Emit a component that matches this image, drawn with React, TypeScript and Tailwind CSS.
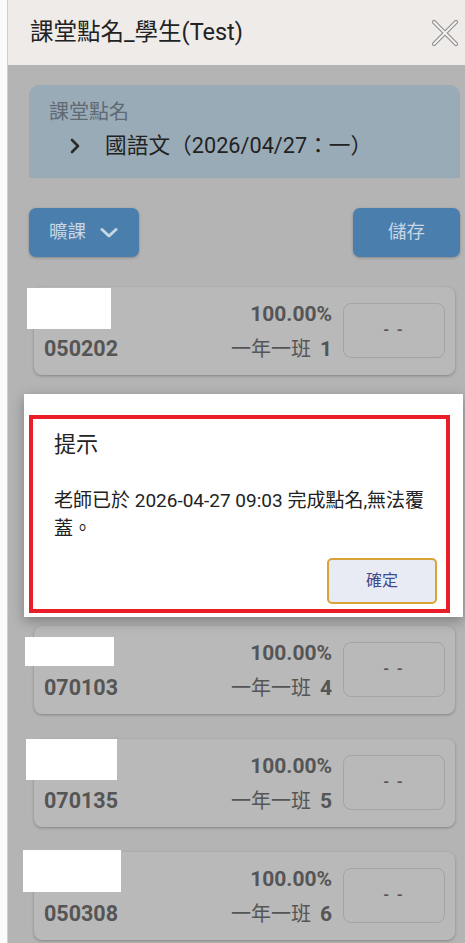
import React from "react";

type Row = {
  id: string;
  seat: number;
  mask: { left: number; top: number; width: number; height: number };
};

const rows: Row[] = [
  { id: "050202", seat: 1, mask: { left: -7, top: 1, width: 84, height: 41 } },
  { id: "050215", seat: 2, mask: { left: -8, top: 0, width: 88, height: 40 } },
  { id: "060117", seat: 3, mask: { left: -8, top: 0, width: 88, height: 40 } },
  { id: "070103", seat: 4, mask: { left: -9, top: 11, width: 89, height: 29 } },
  { id: "070135", seat: 5, mask: { left: -8, top: 0, width: 91, height: 41 } },
  { id: "050308", seat: 6, mask: { left: -11, top: -2, width: 98, height: 42 } },
];

function CloseIcon() {
  return (
    <svg width="28" height="28" viewBox="0 0 28 28" fill="none">
      <path d="M3 3 L25 25 M25 3 L3 25" stroke="#8f8f8f" strokeWidth="4.2" strokeLinecap="round" />
      <path d="M3 3 L25 25 M25 3 L3 25" stroke="#f4f1ef" strokeWidth="2" strokeLinecap="round" />
    </svg>
  );
}

function StudentCard({ row }: { row: Row }) {
  return (
    <div className="relative h-[88px] shrink-0 rounded-[8px] bg-[#b9b9b9] shadow-[0_1px_3px_rgba(0,0,0,0.28)] pl-[10px] pr-[10px] pt-[14px] flex items-start">
      <div
        className="absolute bg-white"
        style={{
          left: row.mask.left,
          top: row.mask.top,
          width: row.mask.width,
          height: row.mask.height,
        }}
      />
      <div className="flex-1 mt-[35px] text-[21.5px] leading-[26px] font-bold text-[#555555]">
        {row.id}
      </div>
      <div className="flex flex-col items-end text-[#555555]">
        <div className="text-[21px] leading-[26px] font-bold">100.00%</div>
        <div className="mt-[9px] text-[20px] leading-[26px] flex items-baseline gap-[9px]">
          <span>一年一班</span>
          <span className="font-bold text-[21px]">{row.seat}</span>
        </div>
      </div>
      <div className="ml-[11px] mt-[2px] w-[102px] h-[55px] rounded-[8px] border border-[#a4a4a4] flex items-center justify-center text-[15px] font-bold text-[#555555] tracking-[2px]">
        - -
      </div>
    </div>
  );
}

export default function App() {
  return (
    <div className="relative w-[465px] h-[943px] overflow-hidden flex bg-white font-['Roboto','Noto_Sans_CJK_TC',sans-serif]">
      <div className="w-[8px] shrink-0 bg-[#fbfbfb] border-r border-[#cfcfcf]" />
      <div className="flex-1 flex flex-col">
        <header className="h-[65px] shrink-0 bg-[#efebe8] flex items-center justify-between pl-[22px] pr-[6px]">
          <h1 className="text-[23.5px] text-[#222222]">課堂點名_學生(Test)</h1>
          <CloseIcon />
        </header>
        <main className="flex-1 bg-[#b4b4b4] pt-[20px] flex flex-col">
          <section className="ml-[21px] mr-[5px] h-[93px] rounded-t-[10px] bg-[#9aabb8] pl-[20px] pt-[14px]">
            <div className="text-[20px] leading-[26px] text-[#5f6a73]">課堂點名</div>
            <div className="mt-[7px] flex items-center">
              <svg width="22" height="22" viewBox="0 0 22 22" className="ml-[15px]">
                <path d="M8 5 L14 11 L8 17" stroke="#2b2b2b" strokeWidth="2.6" fill="none" strokeLinecap="round" strokeLinejoin="round" />
              </svg>
              <span className="ml-[19px] text-[21.7px] leading-[28px] text-[#222222]">
                國語文（2026/04/27：一）
              </span>
            </div>
          </section>
          <div className="mt-[30px] ml-[21px] mr-[5px] flex justify-between">
            <button className="w-[110px] h-[49px] rounded-[7px] bg-[#4a7ead] shadow-[0_1px_3px_rgba(0,0,0,0.25)] flex items-center pl-[20px] text-[18.5px] text-[#c6d6e4]">
              <span>曠課</span>
              <svg width="18" height="12" viewBox="0 0 18 12" className="ml-[14px]">
                <path d="M2 2.5 L9 9 L16 2.5" stroke="#c6d6e4" strokeWidth="3" fill="none" strokeLinecap="round" strokeLinejoin="round" />
              </svg>
            </button>
            <button className="w-[107px] h-[49px] rounded-[7px] bg-[#4a7ead] shadow-[0_1px_3px_rgba(0,0,0,0.25)] text-[18.5px] text-[#c6d6e4]">
              儲存
            </button>
          </div>
          <div className="mt-[30px] ml-[26px] mr-[10px] flex flex-col gap-[25px]">
            {rows.map((r) => (
              <StudentCard key={r.seat} row={r} />
            ))}
          </div>
        </main>
      </div>

      <div className="absolute left-[24px] top-[394px] w-[439px] h-[223px] bg-white shadow-[0_4px_12px_rgba(0,0,0,0.3)]">
        <div className="absolute left-[5px] top-[21px] w-[421px] h-[198px] border-[4px] border-[#e91e29] pointer-events-none" />
        <div className="pl-[30px] pr-[26px] pt-[36px]">
          <div className="text-[22px] leading-[30px] text-[#222222]">提示</div>
          <p className="mt-[27px] text-[19px] leading-[28px] text-[#222222]">
            老師已於 2026-04-27 09:03 完成點名,無法覆蓋。
          </p>
          <div className="flex justify-end mt-[15px]">
            <button className="w-[110px] h-[46px] rounded-[5px] border-2 border-[#d9a33a] bg-[#e8eaf4] text-[16px] text-[#3c4b8d]">
              確定
            </button>
          </div>
        </div>
      </div>
    </div>
  );
}
